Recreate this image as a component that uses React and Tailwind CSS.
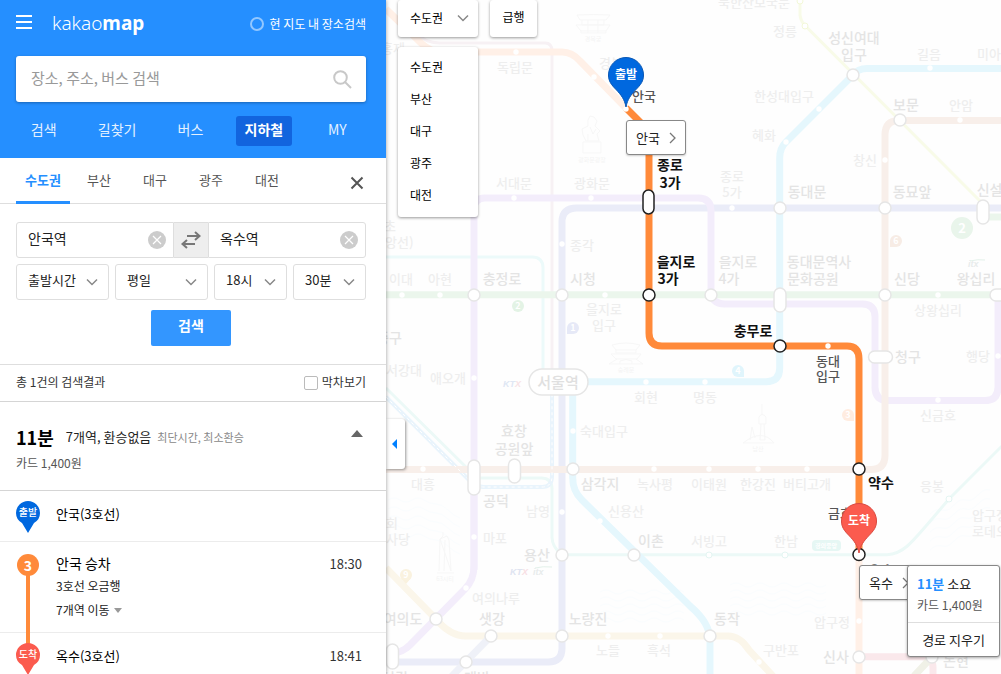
import React from "react";

const LINES = [
  { d: "M386 257H532Q543 257 543 268V370", c: "#ecfafa", w: 3 },
  { d: "M386 388L474 475M480 478H541Q552 478 552 489V537Q552 547 562 554.7H887C905 554 912 542 949 499L1001 447L1100 348", c: "#ecf9f7", w: 3 },
  { d: "M386 397L470 481Q476 487 484 487H542Q552 487 552 476V394", c: "#e9f4fc", w: 4 },
  { d: "M406 0C408 30 420 43 440 43H545Q552 43 552 51V370", c: "#f7f1f4", w: 3 },
  { d: "M800 0V15Q801 22 805.500 26L983 204", c: "#f8fbe8", w: 3 },
  { d: "M386 9L421 43Q430 52 442 52H562Q572 52 580 61L626 108", c: "#fff0e7", w: 7 },
  { d: "M859 555V674V1400", c: "#fff0e7", w: 7 },
  { d: "M386 294.700H992", c: "#ebf6ec", w: 7 },
  { d: "M983 217H1600", c: "#ebf6ec", w: 7 },
  { d: "M1600 208H577Q562 208 562 222V648Q562 662 548 662H395", c: "#eaecf8", w: 7 },
  { d: "M474 570V209Q474 198 485 198H698Q711 198 711 211V290Q711 304 725 304H862Q875 304 875 317V387Q875 400.500 888 400.500H985Q998 400.500 998 387V300L1030 270", c: "#f3edfb", w: 7 },
  { d: "M474 480V566Q474 580 465 589L410 645Q402 653 392 653", c: "#f3edfb", w: 7 },
  { d: "M1600 120.500H899Q885 120.500 885 135V455Q885 469.500 871 469.500H386", c: "#f8efea", w: 7 },
  { d: "M1600 68.500H867Q858 68.500 853 75L786 142Q779.700 148 779.700 158V368Q779.700 381.700 766 381.700H586M572.700 394V478Q572.700 491 582 500L690 606Q710 623 710 640V1400", c: "#e5f7fd", w: 7 },
  { d: "M386 568L436 619Q450 636 466 636H728Q740 636 749 650L773 676", c: "#fbf6ea", w: 7 },
  { d: "M491 636L450 678", c: "#eff1f8", w: 7 },
  { d: "M859 656.700H922Q933 657 933 668V1400", c: "#fae8eb", w: 7 },
  { d: "M932 657L914 676", c: "#f0f1e7", w: 7 },
];

const ROUTE = "M626 108L644 126Q649 131 649 140V333Q649 346 662 346H847Q859 346 859 359V554";

const DOTS = [
  [516, 52], [594, 77], [514, 198], [591, 198], [732, 208], [786, 142], [819, 109], [930, 68], [885, 160], [960, 120],
  [562, 244], [402, 295], [440, 295], [605, 295], [938, 295], [998, 356], [938, 400], [646, 382], [705, 382], [573, 431],
  [474, 378], [423, 469], [654, 469], [709, 469], [758, 469], [807, 469], [562, 512], [600, 521], [474, 537], [466, 588],
  [608, 636], [660, 636], [759, 662], [859, 621], [828, 346], [626, 109],
];

const SMALL_STOPS = [
  [800, 1, "#f3f8d8"], [805, 26, "#f3f8d8"], [709, 555, "#e4f5f2"], [785, 555, "#e4f5f2"], [949, 499, "#e4f5f2"],
];

const STATIONS = [
  [853, 75], [900, 120], [780, 208], [885, 208], [474, 295], [562, 295], [711, 295], [885, 295], [573, 469], [562, 555],
  [634, 555], [436, 619], [491, 636], [466, 662], [562, 636], [710, 636], [859, 657], [932, 657],
];

const PILLS = [
  [977, 200, 12, 24], [774, 288, 12, 24], [468, 460, 12, 35], [508.5, 459, 12, 24], [868.5, 351, 24, 12], [990, 289, 24, 12], [386.5, 644, 12, 25],
];

const MINOR = [
  ["홍제", 393, 48], ["독립문", 515, 67], ["경복궁", 617, 63], ["서대문", 514, 183], ["광화문", 592, 183], ["종로", 732, 176], ["5가", 732, 192],
  ["북한산보국문", 754, 2], ["정릉", 785, 31], ["한성대입구", 784, 96], ["혜화", 764, 135], ["창신", 865, 160], ["길음", 929, 54],
  ["미아사거리", 1007, 54], ["안암", 961, 105], ["종각", 582, 245], ["이대", 401, 279], ["아현", 440, 279], ["을지로", 604, 309],
  ["입구", 604, 325], ["서강대", 404, 370], ["애오개", 448, 378], ["회현", 646, 397], ["명동", 705, 397], ["숙대입구", 604, 431],
  ["상왕십리", 938, 310], ["행당", 978, 356], ["신금호", 938, 415], ["대흥", 423, 484], ["녹사평", 655, 484], ["이태원", 709, 484],
  ["한강진", 758, 484], ["버티고개", 807, 484], ["신용산", 626, 511], ["남영", 538, 511], ["마포", 495, 538], ["국회", 386, 523],
  ["의사당", 392, 539], ["여의나루", 496, 598], ["노들", 608, 650], ["흑석", 659, 650], ["서빙고", 709, 541], ["한남", 786, 541],
  ["응봉", 932, 486], ["압구정", 990, 515], ["로데오", 990, 531], ["압구정", 832, 622], ["구반포", 781, 650], ["(중앙선)", 391, 242], ["서초", 384, 226],
];

const MAJOR = [
  ["성신여대", 854, 38], ["입구", 854, 55], ["보문", 906, 105], ["동대문", 807, 192], ["동묘앞", 912, 192], ["신설동", 996, 190],
  ["충정로", 502, 279], ["시청", 583, 279], ["을지로", 738, 262], ["4가", 729, 279], ["동대문역사", 819, 262], ["문화공원", 813, 279],
  ["신당", 907, 279], ["왕십리", 976, 279], ["청구", 908, 357], ["효창", 514, 431], ["공원앞", 514, 449], ["공덕", 496, 501],
  ["삼각지", 600, 484], ["용산", 537, 555], ["이촌", 651, 541], ["여의도", 403, 619], ["샛강", 492, 619], ["노량진", 588, 619],
  ["동작", 727, 619], ["신사", 836, 657], ["논현", 956, 661], ["대방", 477, 678], ["신길", 395, 678], ["중구", 389, 338],
];

const ROUTE_MAJOR = [
  ["종로", 670, 165], ["3가", 670, 183], ["을지로", 676, 262], ["3가", 668, 279], ["충무로", 753, 331], ["약수", 881, 483], ["옥수", 881, 571],
];

const ROUTE_MINOR = [
  ["안국", 644, 96], ["동대", 828, 361], ["입구", 828, 376], ["금호", 840, 513],
];

const BADGES = [
  ["2", 518, 306, "#e3f3e5", "M524 300V306"], ["1", 573, 328, "#e6e9f7", "M567 328V334H573Z"], ["6", 896, 241, "#f7ece5", "M890 241V247H896Z"],
  ["4", 738, 371, "#e0f5fc", "M738 377H744V371Z"], ["3", 848, 415, "#ffece0", "M848 421H854V415Z"], ["9", 406, 575, "#faf2df", "M401 578L406 584L411 578Z"],
];

function Labels({ items, size, weight, fill }) {
  return (
    <g fontSize={size} fontWeight={weight} fill={fill} textAnchor="middle">
      {items.map(([t, x, y], i) => (
        <text key={i} x={x} y={y + 5}>{t}</text>
      ))}
    </g>
  );
}

function Landmarks() {
  return (
    <g fill="none" stroke="#f7f7f7" strokeWidth="1">
      <path d="M577 15Q593 14 610 15L606 20H580ZM582 20V25H604V20M576 25H610L606 31H581ZM581 31V33H606V31M588 20V33M598 20V33" />
      <path d="M588 120L590 116L594 117L597 121L595 126L600 131L597 134L599 141H586L583 135L582 129L588 126ZM590 127L593 134L596 129M588 134V141M583 142H601V153H583Z" />
      <path d="M612 345Q626 341 640 345L636 350H616ZM616 350V353H636V350M611 354H641L637 359H616ZM617 359L609 364H643L636 359M620 364V361Q626 358 632 361V364" />
      <path d="M762 404V415M759 417Q762 412 766 417V424H759ZM761 424L760 440H765L764 424M743 443Q762 428 774 443ZM750 440L752 427L755 438" />
      <path d="M439 571L440 539L443 536V532M440 539L447 536L449 540L451 571ZM445 540L444 571M437 573H454" />
      <g fill="#f4f4f4" stroke="none" fontSize="6" textAnchor="middle">
        <text x="593" y="41">경복궁</text>
        <text x="592" y="162">광화문광장</text>
        <text x="626" y="372">숭례문</text>
        <text x="758" y="451">남산</text>
        <text x="445" y="581">63시티</text>
      </g>
    </g>
  );
}

function River() {
  const rows = [0, 1, 2, 3, 4];
  return (
    <g fill="none" stroke="#fafdfe" strokeWidth="1">
      {rows.map((r) => (
        <g key={r}>
          <path d={`M388 ${500 + r * 9}q6 -4 12 0t12 0t12 0t12 4t12 6t12 8`} />
          <path d={`M600 ${592 + r * 7}q6 -4 12 0t12 0t12 0t12 0t12 0t12 0t12 0`} />
          <path d={`M730 ${585 + r * 7}q6 -4 12 0t12 0t12 0t12 0t12 0t12 0t12 0t12 0`} />
          <path d={`M930 ${550 - r * 9}q6 -6 12 -4t12 -5t12 -5t12 -5t12 -5`} />
        </g>
      ))}
    </g>
  );
}

function SubwayMap() {
  return (
    <svg className="block h-full w-full font-['Noto_Sans_CJK_KR',sans-serif]" role="img" aria-label="수도권 지하철 노선도">
      <g transform="translate(-386 0)">
        <River />
        <Landmarks />
        {LINES.map((l, i) => (
          <path key={i} d={l.d} fill="none" stroke={l.c} strokeWidth={l.w} />
        ))}
        <path d="M386 397L470 481Q476 487 484 487H542Q552 487 552 476V394" fill="none" stroke="#fff" strokeWidth="1" strokeDasharray="3 3" />
        <Labels items={MINOR} size={13} weight={500} fill="#eeeeee" />
        <Labels items={MAJOR} size={14} weight={500} fill="#e4e4e4" />
        <Labels items={ROUTE_MINOR} size={13} weight={500} fill="#555" />
        <Labels items={ROUTE_MAJOR} size={14} weight={700} fill="#111" />
        <g fontSize="9" fontWeight="700" textAnchor="middle">
          {BADGES.map(([t, x, y, c, tail]) => (
            <g key={t}>
              <circle cx={x} cy={y} r="6" fill={c} />
              <path d={tail} fill={c} />
              <text x={x} y={y + 3} fill="#fff">{t}</text>
            </g>
          ))}
          <circle cx="962" cy="228" r="11" fill="#e9f5eb" />
          <text x="962" y="233" fontSize="13" fill="#fff">2</text>
          <rect x="812" y="540" width="29" height="11" rx="4" fill="#e6f7f4" />
          <text x="826" y="548" fontSize="6" fill="#fff">경의중앙</text>
        </g>
        <g fontSize="9" fontWeight="700" fontStyle="italic" fontFamily="Liberation Sans, sans-serif">
          <text x="503" y="387" fill="#dfe7f4">KT<tspan fill="#f8e3e6">X</tspan></text>
          <text x="510" y="575" fill="#dfe4f1">KT<tspan fill="#f8e0e4">X</tspan></text>
          <text x="533" y="575" fill="#e8ecec">itx</text>
          <text x="968" y="267" fill="#e8ecec">itx</text>
          <path d="M535 568Q543 566 552 567M970 261Q978 259 985 260" fill="none" stroke="#e3f1ea" />
        </g>
        <path d={ROUTE} fill="none" stroke="#ff8a3a" strokeWidth="7" />
        {DOTS.map(([x, y], i) => (
          <circle key={i} cx={x} cy={y} r="2.700" fill="#fff" />
        ))}
        {SMALL_STOPS.map(([x, y, c], i) => (
          <circle key={i} cx={x} cy={y} r="3" fill="#fff" stroke={c} />
        ))}
        <g fill="#fff" stroke="#e6e6e6" strokeWidth="1.500">
          {STATIONS.map(([x, y], i) => (
            <circle key={i} cx={x} cy={y} r="6" />
          ))}
          {PILLS.map(([x, y, w, h], i) => (
            <rect key={i} x={x} y={y} width={w} height={h} rx="6" />
          ))}
          <rect x="529" y="369" width="59" height="26" rx="13" />
        </g>
        <text x="558" y="388" fontSize="15" fontWeight="500" fill="#e0e0e0" textAnchor="middle">서울역</text>
        <g fill="#fff" stroke="#222" strokeWidth="1.500">
          <circle cx="649" cy="295" r="6" />
          <circle cx="780" cy="346" r="6" />
          <circle cx="859" cy="469" r="6" />
          <circle cx="859" cy="554.500" r="6" />
          <rect x="643" y="190" width="11" height="24" rx="5.500" />
        </g>
      </g>
    </svg>
  );
}

function Chevron({ className }) {
  return (
    <svg className={className} width="12" height="8" viewBox="0 0 12 8" fill="none" stroke="#888" strokeWidth="1.500" aria-hidden="true">
      <path d="M1 1.500L6 6.500L11 1.500" />
    </svg>
  );
}

function MapPin({ label, fill, stroke }) {
  return (
    <svg className="block" width="36" height="51" viewBox="0 0 36 51">
      <path
        d="M18 50C16.500 42 13 38 8.500 33C3 27.500.500 24 .500 18A17.500 17.500 0 0 1 35.500 18C35.500 24 33 27.500 27.500 33C23 38 19.500 42 18 50Z"
        fill={fill}
        stroke={stroke}
      />
      <text x="18" y="22" fontSize="12" fontWeight="700" fill="#fff" textAnchor="middle">{label}</text>
    </svg>
  );
}

function ListPin({ label, fill }) {
  return (
    <svg className="block" width="24" height="32" viewBox="0 0 24 32">
      <path d="M12 32L6 22Q0 18.500 0 12A12 12 0 0 1 24 12Q24 18.500 18 22Z" fill={fill} />
      <text x="12" y="15" fontSize="10" fontWeight="500" fill="#fff" textAnchor="middle">{label}</text>
    </svg>
  );
}

function StationField({ id, label, value, rounded }) {
  return (
    <div className={`relative min-w-0 flex-1 border border-[#dedede] ${rounded}`}>
      <input id={id} aria-label={label} defaultValue={value} className="h-full w-full bg-transparent pr-9 pb-1 pl-[11px] text-sm text-[#222] outline-none" />
      <button type="button" aria-label={`${label} 지우기`} className="absolute top-2 right-[7px] size-[18px]">
        <svg viewBox="0 0 18 18" width="18" height="18">
          <circle cx="9" cy="9" r="9" fill="#ccc" />
          <path d="M5 5L13 13M13 5L5 13" stroke="#fff" strokeWidth="1.200" />
        </svg>
      </button>
    </div>
  );
}

function TimeSelect({ label, value, options, grow }) {
  return (
    <div className={`relative h-9 min-w-0 ${grow}`}>
      <select aria-label={label} defaultValue={value} className="h-full w-full appearance-none rounded-[3px] border border-[#dedede] bg-white pr-6 pb-1 pl-[11px] text-[13px] text-[#222]">
        {options.map((o) => (
          <option key={o}>{o}</option>
        ))}
      </select>
      <Chevron className="pointer-events-none absolute top-[14px] right-[11px]" />
    </div>
  );
}

function Header() {
  const nav = ["검색", "길찾기", "버스", "지하철", "MY"];
  return (
    <header className="h-[158px] shrink-0 bg-[#258fff] text-white">
      <div className="flex h-14 items-center justify-between pr-5 pb-2 pl-4">
        <div className="flex items-center">
          <button type="button" aria-label="메뉴" className="mr-5 pb-1">
            <svg className="block" width="16" height="14" viewBox="0 0 16 14" fill="#fff">
              <path d="M0 0h16v2H0zM0 6h16v2H0zM0 12h16v2H0z" />
            </svg>
          </button>
          <a href="#home" className="pb-0.5 font-['Noto_Sans',sans-serif] text-[19px] leading-6 font-light">
            kakao<span className="font-bold">map</span>
          </a>
        </div>
        <label className="flex items-center gap-1.5 text-xs">
          <input type="checkbox" className="size-[14px] appearance-none rounded-full border-2 border-[#92c7ff] checked:bg-white" />
          현 지도 내 장소검색
        </label>
      </div>
      <form className="mr-5 ml-4 flex h-[46px] items-center rounded-[3px] bg-white shadow-[0_1px_3px_rgba(0,0,0,0.3)]" role="search">
        <input aria-label="장소, 주소, 버스 검색" placeholder="장소, 주소, 버스 검색" className="h-full min-w-0 flex-1 bg-transparent pb-1 pl-[15px] text-[15px] text-black outline-none placeholder:text-[#999]" />
        <button type="button" aria-label="검색" className="mr-[14px]">
          <svg className="block" width="19" height="19" viewBox="0 0 19 19" fill="none" stroke="#c8c8c8" strokeWidth="2">
            <circle cx="7.500" cy="7.500" r="6.300" />
            <path d="M12 12L18 18" />
          </svg>
        </button>
      </form>
      <nav className="mt-[14px] mr-3 ml-[7px] grid grid-cols-5 justify-items-center text-sm">
        {nav.map((n) => (
          <a
            key={n}
            href="#nav"
            className={n === "지하철" ? "h-[30px] rounded-[3px] bg-[#1264de] px-[9px] leading-[26px] font-bold" : "h-[30px] leading-[26px] text-[#e4f1ff]"}
          >
            {n}
          </a>
        ))}
      </nav>
    </header>
  );
}

function Sidebar() {
  const cities = ["수도권", "부산", "대구", "광주", "대전"];
  return (
    <aside className="relative z-10 flex h-full w-[386px] shrink-0 flex-col overflow-hidden bg-white shadow-[0_0_4px_rgba(0,0,0,0.4)]">
      <Header />
      <div className="flex h-[46px] shrink-0 items-start justify-between border-b border-[#dedede] pr-[22px] pl-4">
        <div className="flex gap-0.5 text-[13px]">
          {cities.map((c, i) => (
            <button
              key={c}
              type="button"
              className={i === 0 ? "h-[46px] w-[54px] border-b-[3px] border-[#258fff] font-bold text-[#258fff]" : "h-[46px] w-[54px] border-b-[3px] border-transparent text-[#555]"}
            >
              {c}
            </button>
          ))}
        </div>
        <button type="button" aria-label="닫기" className="mt-[18px]">
          <svg className="block" width="14" height="14" viewBox="0 0 14 14" stroke="#555" strokeWidth="2">
            <path d="M1.500 1.500L12.500 12.500M12.500 1.500L1.500 12.500" />
          </svg>
        </button>
      </div>

      <form className="shrink-0 border-b border-[#dedede] pt-[18px] pr-5 pb-[18px] pl-4">
        <div className="flex h-9">
          <StationField id="from" label="출발역" value="안국역" rounded="rounded-l-[3px]" />
          <button type="button" aria-label="출발 도착 바꾸기" className="flex w-[34px] items-center justify-center border-y border-[#dedede] bg-[#eee]">
            <svg width="20" height="18" viewBox="0 0 20 18" fill="none" stroke="#777" strokeWidth="2">
              <path d="M6 5H18M14 1L18.500 5L14 9M14 13H2M6 9L1.500 13L6 17" />
            </svg>
          </button>
          <StationField id="to" label="도착역" value="옥수역" rounded="rounded-r-[3px]" />
        </div>
        <div className="mt-1.5 flex gap-1.5">
          <TimeSelect label="기준" value="출발시간" options={["출발시간", "도착시간"]} grow="flex-[93]" />
          <TimeSelect label="요일" value="평일" options={["평일", "토요일", "휴일"]} grow="flex-[93]" />
          <TimeSelect label="시" value="18시" options={["17시", "18시", "19시"]} grow="flex-[73]" />
          <TimeSelect label="분" value="30분" options={["00분", "30분"]} grow="flex-[73]" />
        </div>
        <button type="button" className="mx-auto mt-[10px] block h-9 w-20 rounded-[2px] bg-[#3396ff] pb-1.5 text-sm font-bold text-white">검색</button>
      </form>

      <div className="flex h-[37px] shrink-0 items-center justify-between border-b border-[#d5d5d5] pr-5 pb-0.5 pl-4 text-xs text-[#333]">
        <p>총 1건의 검색결과</p>
        <label className="flex items-center gap-1">
          <input type="checkbox" className="mt-0.5 size-[14px] appearance-none rounded-[2px] border border-[#bbb] bg-white checked:bg-[#258fff]" />
          막차보기
        </label>
      </div>

      <section className="h-[89px] shrink-0 border-b border-[#d5d5d5] pt-[23px] pr-[23px] pl-4">
        <div className="flex h-6 items-center">
          <h2 className="text-lg leading-6 font-bold text-black">11분</h2>
          <p className="ml-3 text-[13px] text-[#222]">7개역, 환승없음</p>
          <p className="ml-1.5 text-[11px] text-[#888]">최단시간, 최소환승</p>
          <button type="button" aria-label="상세 접기" className="mb-2 ml-auto">
            <svg className="block" width="12" height="7" viewBox="0 0 12 7" fill="#666">
              <path d="M6 0L12 7H0Z" />
            </svg>
          </button>
        </div>
        <p className="mt-1 text-xs leading-5 text-[#555]">카드 1,400원</p>
      </section>

      <ol className="text-[13px] text-black">
        <li className="flex h-[51px] items-start border-b border-[#ececec] pt-[10px] pl-4">
          <ListPin label="출발" fill="#0068df" />
          <p className="ml-4 pt-[3px] leading-5">안국(3호선)</p>
        </li>
        <li className="relative flex h-[91px] items-start border-b border-[#ececec] pt-3 pr-6 pl-[17px]">
          <span className="absolute top-8 left-[26px] z-10 h-[74px] w-1 bg-[#ff8a3a]" />
          <span className="flex size-[22px] items-center justify-center rounded-full bg-[#ff8a3a] pb-px text-sm leading-5 font-bold text-white">3</span>
          <div className="ml-[17px] flex-1">
            <p className="text-sm leading-[18px]">안국 승차</p>
            <p className="mt-0.5 text-xs leading-6 text-[#222]">3호선 오금행</p>
            <button type="button" className="flex items-center gap-1 text-xs leading-6 text-[#222]">
              7개역 이동
              <svg width="8" height="5" viewBox="0 0 8 5" fill="#999">
                <path d="M0 0H8L4 5Z" />
              </svg>
            </button>
          </div>
          <time className="leading-5 text-[#333]">18:30</time>
        </li>
        <li className="flex items-start pt-[10px] pr-6 pl-4">
          <div className="relative z-20"><ListPin label="도착" fill="#fb5b4e" /></div>
          <p className="ml-4 flex-1 pt-[3px] leading-5">옥수(3호선)</p>
          <time className="pt-[3px] leading-5 text-[#333]">18:41</time>
        </li>
      </ol>
    </aside>
  );
}

function StationPopup({ name }) {
  return (
    <button type="button" className="flex h-[35px] w-[60px] items-center justify-between rounded-[3px] border border-[#888] bg-white px-[9px] text-[13px] text-[#222] shadow-[0_1px_2px_rgba(0,0,0,0.2)]">
      {name}
      <svg width="7" height="12" viewBox="0 0 7 12" fill="none" stroke="#777" strokeWidth="1.300">
        <path d="M1 1L6 6L1 11" />
      </svg>
    </button>
  );
}

function MapArea() {
  const regions = ["수도권", "부산", "대구", "광주", "대전"];
  return (
    <main className="relative min-w-0 flex-1 overflow-hidden bg-[#fefefe]">
      <SubwayMap />

      <div className="absolute top-0 left-3 flex flex-col items-start gap-[10px] text-xs text-black">
        <div className="flex gap-3">
          <button type="button" className="flex h-[37px] w-20 items-center justify-between rounded-[3px] bg-white pr-[9px] pb-0.5 pl-3 shadow-[0_1px_3px_rgba(0,0,0,0.4)]">
            수도권
            <Chevron />
          </button>
          <button type="button" className="h-[37px] w-[47px] rounded-[3px] bg-white pb-1 shadow-[0_1px_3px_rgba(0,0,0,0.4)]">급행</button>
        </div>
        <ul className="w-20 rounded-[3px] bg-white pt-1 pb-1.5 shadow-[0_1px_3px_rgba(0,0,0,0.4)]">
          {regions.map((r) => (
            <li key={r}>
              <button type="button" className="block h-8 w-full pl-3 text-left">{r}</button>
            </li>
          ))}
        </ul>
      </div>

      <div className="absolute top-[57px] left-[222px]"><MapPin label="출발" fill="#0068df" stroke="#0a58b5" /></div>
      <div className="absolute top-[120px] left-[240px]"><StationPopup name="안국" /></div>
      <div className="absolute top-[503px] left-[455px]"><MapPin label="도착" fill="#fb5b4e" stroke="#d94a40" /></div>
      <div className="absolute top-[565px] left-[473px]"><StationPopup name="옥수" /></div>

      <div className="absolute top-[565px] left-[521px] w-[93px] rounded-[3px] border border-[#888] bg-white shadow-[0_1px_3px_rgba(0,0,0,0.35)]">
        <div className="h-[57px] border-b border-[#dedede] pt-2 pl-[9px]">
          <p className="text-[13px] leading-5 text-[#222]"><strong className="text-[#258fff]">11분</strong> 소요</p>
          <p className="text-xs leading-[22px] text-[#555]">카드 1,400원</p>
        </div>
        <button type="button" className="block h-[33px] w-full text-[13px] text-[#222]">경로 지우기</button>
      </div>

      <button type="button" aria-label="사이드바 접기" className="absolute top-[419px] left-0 flex h-[50px] w-[19px] items-center rounded-r-[3px] bg-white pl-1.5 shadow-[1px_1px_3px_rgba(0,0,0,0.4)]">
        <svg width="5" height="10" viewBox="0 0 5 10" fill="#0080ff">
          <path d="M5 0V10L0 5Z" />
        </svg>
      </button>
    </main>
  );
}

export default function App() {
  return (
    <div className="flex h-screen overflow-hidden bg-white font-['Noto_Sans_CJK_KR',sans-serif]">
      <Sidebar />
      <MapArea />
    </div>
  );
}
